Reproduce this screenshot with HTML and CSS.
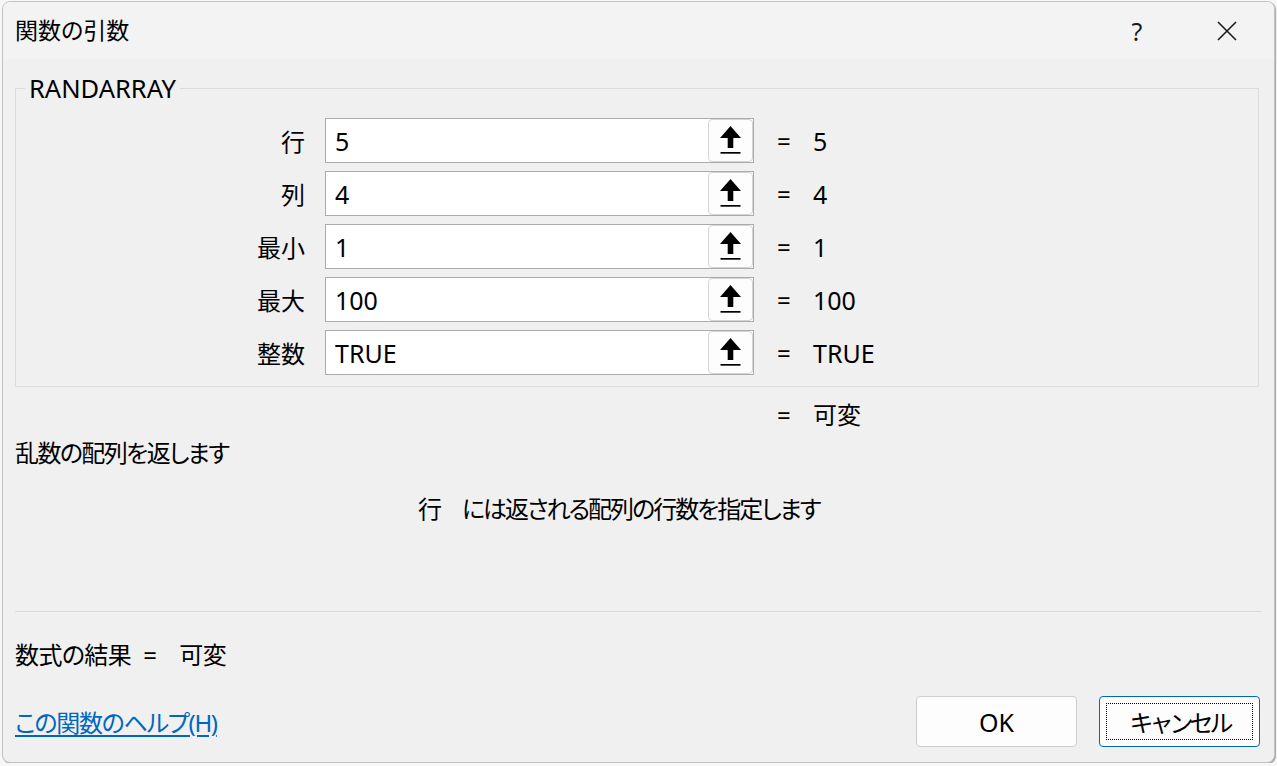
FILE: index.html
```html
<!DOCTYPE html>
<html lang="ja">
<head>
  <meta charset="UTF-8">
  <title>関数の引数</title>
  <link rel="stylesheet" href="styles.css">
</head>
<body>
  <div class="dialog">
    <!-- タイトルバー -->
    <div class="titlebar">
      <span class="title">関数の引数</span>
      <div class="caption-buttons">
        <button class="caption-btn">?</button>
        <button class="caption-btn">
          <svg width="20" height="20" viewBox="0 0 20 20"><path d="M1 1 L19 19 M19 1 L1 19" stroke="#1a1a1a" stroke-width="1.6" fill="none"/></svg>
        </button>
      </div>
    </div>

    <div class="content">
      <!-- 引数グループ -->
      <fieldset class="group">
        <legend>RANDARRAY</legend>
        <div class="args">
          <label class="arg-label">行</label>
          <div class="arg-box"><span class="arg-value">5</span><button class="ref-btn"><svg width="21" height="28" viewBox="0 0 21 28"><path d="M10.5 0 L21 12 L13.3 12 L13.3 22 L7.7 22 L7.7 12 L0 12 Z" fill="#000"/><rect x="0.5" y="26" width="20" height="1.7" fill="#000"/></svg></button></div>
          <span class="eq">=</span><span class="eq-value">5</span>

          <label class="arg-label">列</label>
          <div class="arg-box"><span class="arg-value">4</span><button class="ref-btn"><svg width="21" height="28" viewBox="0 0 21 28"><path d="M10.5 0 L21 12 L13.3 12 L13.3 22 L7.7 22 L7.7 12 L0 12 Z" fill="#000"/><rect x="0.5" y="26" width="20" height="1.7" fill="#000"/></svg></button></div>
          <span class="eq">=</span><span class="eq-value">4</span>

          <label class="arg-label">最小</label>
          <div class="arg-box"><span class="arg-value">1</span><button class="ref-btn"><svg width="21" height="28" viewBox="0 0 21 28"><path d="M10.5 0 L21 12 L13.3 12 L13.3 22 L7.7 22 L7.7 12 L0 12 Z" fill="#000"/><rect x="0.5" y="26" width="20" height="1.7" fill="#000"/></svg></button></div>
          <span class="eq">=</span><span class="eq-value">1</span>

          <label class="arg-label">最大</label>
          <div class="arg-box"><span class="arg-value">100</span><button class="ref-btn"><svg width="21" height="28" viewBox="0 0 21 28"><path d="M10.5 0 L21 12 L13.3 12 L13.3 22 L7.7 22 L7.7 12 L0 12 Z" fill="#000"/><rect x="0.5" y="26" width="20" height="1.7" fill="#000"/></svg></button></div>
          <span class="eq">=</span><span class="eq-value">100</span>

          <label class="arg-label">整数</label>
          <div class="arg-box"><span class="arg-value">TRUE</span><button class="ref-btn"><svg width="21" height="28" viewBox="0 0 21 28"><path d="M10.5 0 L21 12 L13.3 12 L13.3 22 L7.7 22 L7.7 12 L0 12 Z" fill="#000"/><rect x="0.5" y="26" width="20" height="1.7" fill="#000"/></svg></button></div>
          <span class="eq">=</span><span class="eq-value">TRUE</span>
        </div>
      </fieldset>

      <!-- 関数の結果 -->
      <div class="func-result">
        <span class="eq">=</span><span class="eq-value">可変</span>
      </div>

      <div class="func-desc">乱数の配列を返します</div>
      <div class="arg-desc"><span class="arg-name">行</span>には返される配列の行数を指定します</div>

      <div class="separator"></div>

      <div class="formula-result">数式の結果<span class="fr-eq">=</span>可変</div>

      <!-- フッター -->
      <div class="footer">
        <a href="#" class="help-link">この関数のヘルプ(H)</a>
        <div class="buttons">
          <button class="btn">OK</button>
          <button class="btn default"><span class="focus-rect">キャンセル</span></button>
        </div>
      </div>
    </div>
  </div>
</body>
</html>
```

FILE: styles.css
```css
body {
  margin: 0;
  background-color: #f7f7f7;
  font-family: "Noto Sans", "Noto Sans CJK JP", sans-serif;
  font-feature-settings: "palt";
  color: #000;
  font-size: 24px;
}

.dialog {
  box-sizing: border-box;
  width: 1273px;
  height: 762px;
  margin: 1px 0 0 2px;
  background-color: #f0f0f0;
  border: 1px solid #c2c2c2;
  border-radius: 8px;
  box-shadow: 1px 1px 1px #a6a6a6;
  overflow: hidden;
  display: flex;
  flex-direction: column;
}

.titlebar {
  height: 57px;
  background-color: #f3f3f3;
  display: flex;
  align-items: center;
  justify-content: space-between;
  padding-left: 12px;
}

.title {
  font-size: 23px;
  line-height: 57px;
}

.caption-buttons {
  display: flex;
  height: 100%;
  padding-right: 2px;
}

.caption-btn {
  width: 90px;
  height: 100%;
  border: none;
  background: transparent;
  font-family: inherit;
  font-size: 25px;
  color: #1a1a1a;
  display: flex;
  align-items: center;
  justify-content: center;
  padding: 0;
}

.content {
  flex: 1;
  padding: 0 15px 0 12px;
  display: flex;
  flex-direction: column;
}

.group {
  margin: 13px 0 0 0;
  padding: 14px 0 11px 0;
  border: 1px solid #dcdcdc;
  min-width: 0;
}

.group legend {
  margin-left: 9px;
  padding: 0 4px;
  line-height: 32px;
  font-size: 25.5px;
}

.args {
  display: grid;
  grid-template-columns: 309px 429px 59px 1fr;
  grid-auto-rows: 45px;
  row-gap: 8px;
  align-items: center;
}

.arg-label {
  text-align: right;
  padding-right: 20px;
}

.arg-value,
.eq-value {
  font-size: 25px;
}

.arg-box {
  box-sizing: border-box;
  height: 45px;
  background-color: #fff;
  border: 1px solid #ababab;
  display: flex;
  align-items: center;
  justify-content: space-between;
  padding: 0 0 0 9px;
}

.ref-btn {
  width: 45px;
  height: 43px;
  border: 1px solid #d4d4d4;
  border-radius: 4px;
  background-color: #fdfdfd;
  display: flex;
  align-items: center;
  justify-content: center;
  padding: 0 0 2px 0;
}

.eq {
  padding-left: 23px;
}

.func-result {
  display: grid;
  grid-template-columns: 309px 429px 59px 1fr;
  padding-left: 1px;
  margin-top: 12px;
  line-height: 32px;
}

.func-result .eq {
  grid-column: 3;
}

.func-result .eq-value {
  font-size: 24px;
}

.func-desc {
  margin-top: 6px;
  line-height: 32px;
  letter-spacing: -1.6px;
}

.arg-desc {
  margin-top: 24px;
  padding-left: 403px;
  line-height: 32px;
  letter-spacing: -2px;
}

.arg-name {
  margin-right: 22px;
}

.separator {
  margin-top: 86px;
  margin-right: -2px;
  height: 1px;
  background-color: #dadada;
}

.formula-result {
  margin-top: 27px;
  line-height: 32px;
  letter-spacing: -0.6px;
}

.fr-eq {
  margin: 0 23px 0 12px;
}

.footer {
  margin-top: 25px;
  display: flex;
  align-items: center;
  justify-content: space-between;
}

.help-link {
  color: #0067c0;
  text-decoration: underline;
  text-underline-offset: 3px;
  letter-spacing: -1.3px;
}

.buttons {
  display: flex;
  gap: 22px;
  margin-right: -1px;
}

.btn {
  box-sizing: border-box;
  width: 161px;
  height: 51px;
  border: 1px solid #cdcdcd;
  border-radius: 4px;
  background-color: #fdfdfd;
  font-family: inherit;
  font-size: 25px;
  color: #000;
  padding: 0;
  display: flex;
  align-items: center;
  justify-content: center;
}

.btn.default {
  border: 1px solid #0067c0;
  padding: 6px;
  font-size: 24px;
}

.focus-rect {
  flex: 1;
  align-self: stretch;
  border: 1px dotted #000;
  display: flex;
  align-items: center;
  justify-content: center;
  letter-spacing: -4px;
}
```
